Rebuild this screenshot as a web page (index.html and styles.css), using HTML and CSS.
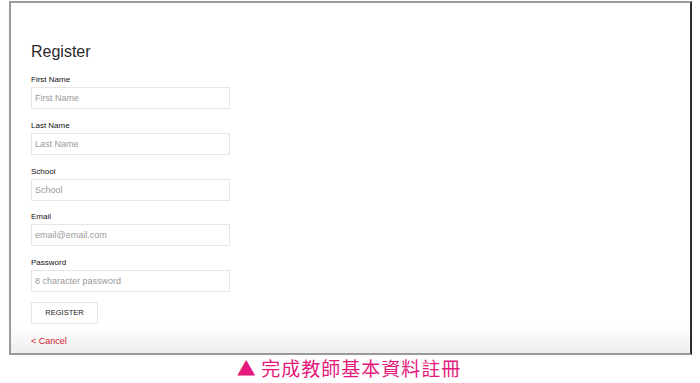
FILE: index.html
```html
<!DOCTYPE html>
<html lang="zh-Hant">
<head>
    <meta charset="UTF-8">
    <meta name="viewport" content="width=device-width, initial-scale=1.0">
    <title>Register</title>
    <link rel="stylesheet" href="styles.css">
</head>
<body>
<div class="screen">
    <div class="register-form">
        <h1>Register</h1>
        <div class="field">
            <label>First Name</label>
            <input type="text" placeholder="First Name">
        </div>
        <div class="field">
            <label>Last Name</label>
            <input type="text" placeholder="Last Name">
        </div>
        <div class="field">
            <label>School</label>
            <input type="text" placeholder="School">
        </div>
        <div class="field">
            <label>Email</label>
            <input type="text" placeholder="email@email.com">
        </div>
        <div class="field">
            <label>Password</label>
            <input type="password" placeholder="8 character password">
        </div>
        <button class="register-btn">REGISTER</button>
        <a class="cancel-link" href="#">&lt; Cancel</a>
    </div>
</div>
<div class="caption"><span class="triangle">▲</span> 完成教師基本資料註冊</div>
</body>
</html>
```

FILE: styles.css
```css
body {
    font-family: 'Liberation Sans', Arial, sans-serif;
    background-color: #ffffff;
    margin: 0;
    padding: 0;
}
.screen {
    box-sizing: border-box;
    width: 683px;
    height: 354px;
    margin: 1px 0 0 9px;
    border: 2px solid #9a9a9a;
    border-right-color: #2e2e2e;
    background: linear-gradient(to bottom, #ffffff 0, #ffffff 322px, #eeeeee 100%);
}
.register-form {
    padding: 39px 0 0 20px;
    width: 199px;
}
h1 {
    font-size: 16px;
    font-weight: normal;
    line-height: 20px;
    margin: 0 0 13px 0;
    color: #2a2a2a;
}
.field {
    display: flex;
    flex-direction: column;
    margin-bottom: 11.75px;
}
.field label {
    font-size: 8px;
    line-height: 10px;
    color: #111;
    margin-bottom: 2px;
}
.field input {
    box-sizing: border-box;
    height: 22px;
    width: 199px;
    border: 1px solid #e6e6e6;
    padding: 0 3px;
    font-family: 'Liberation Sans', Arial, sans-serif;
    font-size: 9px;
    color: #333;
    outline: none;
    background: #fff;
}
.field input::placeholder {
    color: #9a9a9a;
}
.register-btn {
    box-sizing: border-box;
    display: block;
    width: 67px;
    height: 22px;
    margin-top: -2px;
    border: 1px solid #e6e6e6;
    background: #fff;
    font-family: 'Liberation Sans', Arial, sans-serif;
    font-size: 7.5px;
    color: #222;
    padding: 0;
}
.cancel-link {
    display: block;
    margin-top: 11px;
    font-size: 9px;
    line-height: 12px;
    color: #d0202e;
    text-decoration: none;
}
.caption {
    text-align: center;
    font-family: 'Noto Sans CJK TC', 'Noto Sans CJK SC', sans-serif;
    font-size: 19px;
    line-height: 26px;
    letter-spacing: 1px;
    color: #e5197b;
    padding-right: 2px;
}
.triangle {
    font-size: 19px;
    letter-spacing: 0;
}
```
